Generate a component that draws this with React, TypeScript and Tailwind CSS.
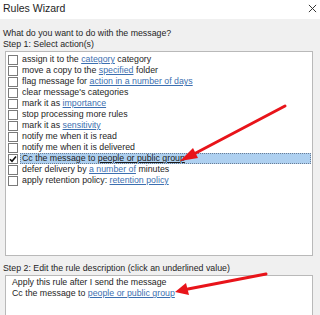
import React from "react";

type Part = { t: string; link?: boolean };

const actions: Part[][] = [
  [{ t: "assign it to the " }, { t: "category", link: true }, { t: " category" }],
  [{ t: "move a copy to the " }, { t: "specified", link: true }, { t: " folder" }],
  [{ t: "flag message for " }, { t: "action in a number of days", link: true }],
  [{ t: "clear message's categories" }],
  [{ t: "mark it as " }, { t: "importance", link: true }],
  [{ t: "stop processing more rules" }],
  [{ t: "mark it as " }, { t: "sensitivity", link: true }],
  [{ t: "notify me when it is read" }],
  [{ t: "notify me when it is delivered" }],
  [{ t: "Cc the message to " }, { t: "people or public group", link: true }],
  [{ t: "defer delivery by " }, { t: "a number of", link: true }, { t: " minutes" }],
  [{ t: "apply retention policy: " }, { t: "retention policy", link: true }],
];

function Text({ parts, selected }: { parts: Part[]; selected?: boolean }) {
  return (
    <>
      {parts.map((p, i) =>
        p.link ? (
          <span
            key={i}
            className={selected ? "text-[#1a1a1a] underline" : "text-[#3c6fb0] underline"}
          >
            {p.t}
          </span>
        ) : (
          <span key={i}>{p.t}</span>
        )
      )}
    </>
  );
}

function Checkbox({ checked }: { checked?: boolean }) {
  return (
    <span className="flex h-[10px] w-[10px] shrink-0 items-center justify-center border border-[#7a7a7a] bg-white">
      {checked && (
        <svg width="8" height="8" viewBox="0 0 8 8">
          <path d="M1 4.2 L3 6.2 L7 1.5" fill="none" stroke="#111" strokeWidth="1.6" />
        </svg>
      )}
    </span>
  );
}

export default function App() {
  return (
    <div
      className="relative h-[315px] w-[320px] overflow-hidden bg-[#f0f0f0] text-[8.8px] leading-none text-[#1e1e1e]"
      style={{ fontFamily: "'Liberation Sans', Arial, sans-serif" }}
    >
      <header className="flex h-[19px] items-center justify-between bg-white pl-[3px] pr-[3px] pb-[3px]">
        <span className="text-[10.5px]">Rules Wizard</span>
        <svg width="9" height="9" viewBox="0 0 10 10">
          <path d="M1 1 L9 9 M9 1 L1 9" stroke="#333" strokeWidth="1.1" />
        </svg>
      </header>

      <div className="px-[5px] pr-[7px]">
        <p className="mt-[9px] flex h-[11px] items-center -ml-[2px]">What do you want to do with the message?</p>
        <p className="flex h-[11px] items-center -ml-[2px]">Step 1: Select action(s)</p>

        <div className="mt-[1px] h-[205px] border border-[#b9b9b9] bg-white pt-[2px] pl-[1px] pr-[1px]">
          {actions.map((parts, i) => {
            const selected = i === 9;
            return (
              <div key={i} className="flex h-[11px] items-center">
                <span className="ml-[1px] mr-[2px]">
                  <Checkbox checked={selected} />
                </span>
                <div
                  className={
                    selected
                      ? "flex h-[11px] flex-1 items-center border border-dotted border-[#6a7d95] bg-[#aed0f0] pl-[1px]"
                      : "flex h-[11px] flex-1 items-center border border-transparent pl-[1px]"
                  }
                >
                  <span className="whitespace-nowrap">
                    <Text parts={parts} selected={selected} />
                  </span>
                </div>
              </div>
            );
          })}
        </div>

        <p className="mt-[7px] flex h-[11px] items-center -ml-[2px]">
          Step 2: Edit the rule description (click an underlined value)
        </p>
        <div className="mt-[1px] h-[60px] border border-[#b9b9b9] bg-white px-[6px] pt-[1px]">
          <p className="flex h-[11px] items-center">Apply this rule after I send the message</p>
          <p className="flex h-[11px] items-center">
            <span>Cc the message to&nbsp;</span>
            <span className="text-[#3c6fb0] underline">people or public group</span>
          </p>
        </div>
      </div>

      <svg
        className="pointer-events-none absolute left-0 top-0"
        width="320"
        height="315"
        viewBox="0 0 320 315"
      >
        <line x1="285" y1="106" x2="192" y2="155" stroke="#e8141a" strokeWidth="3" strokeLinecap="round" />
        <polygon points="180,161 193,148 198,158" fill="#e8141a" />
        <line x1="266" y1="274" x2="188" y2="289" stroke="#e8141a" strokeWidth="3" strokeLinecap="round" />
        <polygon points="175,292 186,283 189,295" fill="#e8141a" />
      </svg>
    </div>
  );
}
